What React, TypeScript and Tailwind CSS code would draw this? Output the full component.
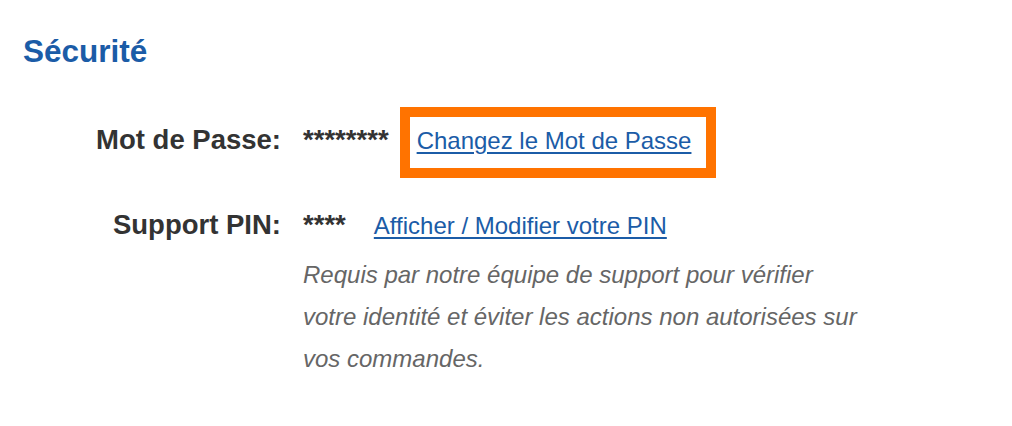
export default function App() {
  return (
    <div className="w-[1012px] h-[426px] bg-white font-['Liberation_Sans',Arial,sans-serif] overflow-hidden">
      <div className="pt-[33px]">
        <h2 className="pl-[23px] text-[31.5px] leading-[36px] font-bold text-[#1b5ca7]">Sécurité</h2>

        {/* Password row */}
        <div className="mt-[38px] flex items-baseline">
          <div className="w-[281px] text-right text-[27.5px] font-bold text-[#333333] leading-[32px]">Mot de Passe:</div>
          <div className="ml-[22px] text-[27.5px] font-bold text-[#333333] leading-[32px]">********</div>
          <div className="ml-[11px] border-[10px] border-[#ff7300] pl-[7px] pr-[15px] py-[10px] leading-[28px]">
            <a href="#" className="text-[24px] text-[#1b5ca7] underline underline-offset-[3px] decoration-[2px]">
              Changez le Mot de Passe
            </a>
          </div>
        </div>

        {/* Support PIN row */}
        <div className="mt-[31px] flex items-baseline">
          <div className="w-[281px] text-right text-[27.5px] font-bold text-[#333333] leading-[32px]">Support PIN:</div>
          <div className="ml-[22px] text-[27.5px] font-bold text-[#333333] leading-[32px]">****</div>
          <a href="#" className="ml-[28px] text-[24px] leading-[28px] text-[#1b5ca7] underline underline-offset-[3px] decoration-[2px]">
            Afficher / Modifier votre PIN
          </a>
        </div>

        <p className="mt-[13px] ml-[303px] w-[560px] text-[24px] leading-[42px] italic text-[#666666]">
          Requis par notre équipe de support pour vérifier votre identité et éviter les actions non autorisées sur vos commandes.
        </p>
      </div>
    </div>
  );
}
